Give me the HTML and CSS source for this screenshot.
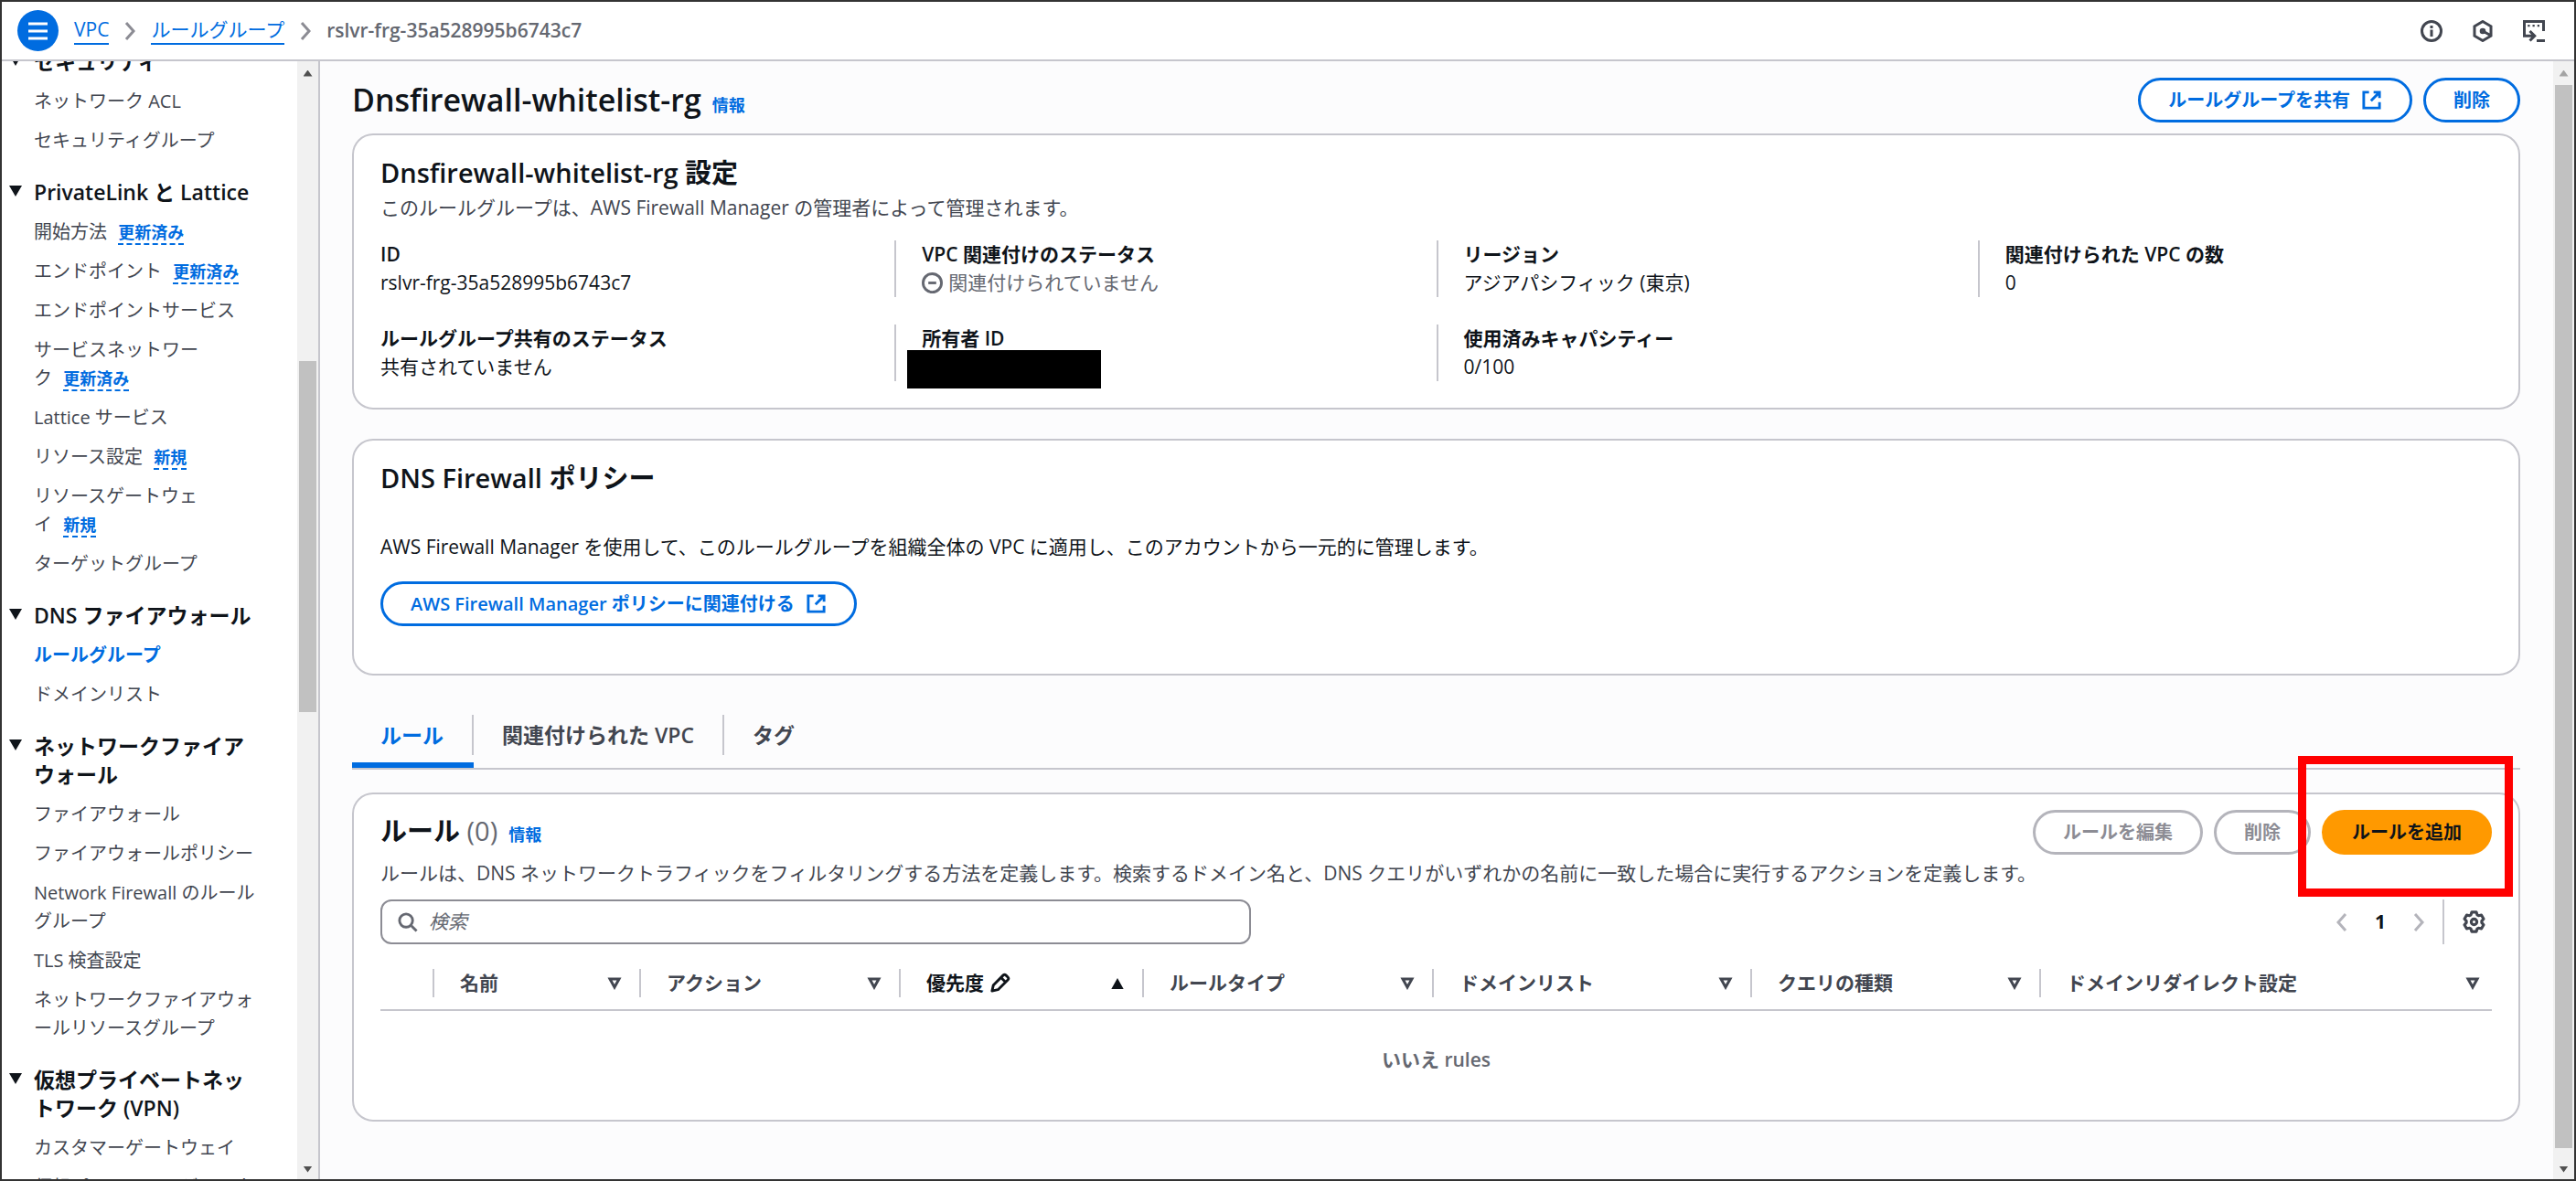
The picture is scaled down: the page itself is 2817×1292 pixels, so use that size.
FILE: index.html
```html
<!DOCTYPE html>
<html lang="ja">
<head>
<meta charset="utf-8">
<meta name="viewport" content="width=device-width, initial-scale=1">
<title>Dnsfirewall-whitelist-rg | VPC</title>
<link rel="stylesheet" href="styles.css">
</head>
<body>
<div class="app">
  <header class="topbar">
    <button class="menu-button" type="button" aria-label="メニュー">
      <svg class="menu-icon" viewBox="0 0 21 20"><path d="M0 2h21M0 10h21M0 18h21" stroke="#fff" stroke-width="3"/></svg>
    </button>
    <nav class="crumbs" aria-label="パンくずリスト">
      <a href="#">VPC</a>
      <svg class="crumb-sep" viewBox="0 0 12 22"><path d="M2 2l8 9-8 9"/></svg>
      <a href="#">ルールグループ</a>
      <svg class="crumb-sep" viewBox="0 0 12 22"><path d="M2 2l8 9-8 9"/></svg>
      <span class="crumb-current">rslvr-frg-35a528995b6743c7</span>
    </nav>
    <div class="tools">
      <button class="tool" type="button" aria-label="情報"><svg class="icon" viewBox="0 0 16 16"><circle cx="8" cy="8" r="7"/><path d="M8 7v5M8 4v2"/></svg></button>
      <button class="tool" type="button" aria-label="診断"><svg class="icon" viewBox="0 0 16 16"><path d="M8 1l6 3.500v7L8 15l-6-3.500v-7zM8 8l5.500 3"/><circle cx="8" cy="8" r="1.200"/></svg></button>
      <button class="tool" type="button" aria-label="CloudShell"><svg class="icon" viewBox="0 0 16 16"><path d="M15 8V1H1v10.500h6.500M5 8l3.500 3.500L5 15M10 15h6"/><path d="M3.500 4h1.500M7 4h1.500M10.500 4H12" stroke-width="1.500"/></svg></button>
    </div>
  </header>

  <div class="body">
    <aside class="sidebar">
      <nav class="side-nav" aria-label="VPC">
        <section class="group">
          <h2 class="group-title">セキュリティ</h2>
          <a href="#">ネットワーク ACL</a>
          <a href="#">セキュリティグループ</a>
        </section>
        <section class="group">
          <h2 class="group-title">PrivateLink と Lattice</h2>
          <a href="#">開始方法&nbsp;<span class="badge">更新済み</span></a>
          <a href="#">エンドポイント&nbsp;<span class="badge">更新済み</span></a>
          <a href="#">エンドポイントサービス</a>
          <a href="#">サービスネットワーク&nbsp;<span class="badge">更新済み</span></a>
          <a href="#">Lattice サービス</a>
          <a href="#">リソース設定&nbsp;<span class="badge">新規</span></a>
          <a href="#">リソースゲートウェイ&nbsp;<span class="badge">新規</span></a>
          <a href="#">ターゲットグループ</a>
        </section>
        <section class="group">
          <h2 class="group-title">DNS ファイアウォール</h2>
          <a href="#" class="current" aria-current="page">ルールグループ</a>
          <a href="#">ドメインリスト</a>
        </section>
        <section class="group">
          <h2 class="group-title">ネットワークファイアウォール</h2>
          <a href="#">ファイアウォール</a>
          <a href="#">ファイアウォールポリシー</a>
          <a href="#">Network Firewall のルールグループ</a>
          <a href="#">TLS 検査設定</a>
          <a href="#">ネットワークファイアウォールリソースグループ</a>
        </section>
        <section class="group">
          <h2 class="group-title">仮想プライベートネットワーク (VPN)</h2>
          <a href="#">カスタマーゲートウェイ</a>
          <a href="#">仮想プライベートゲートウェイ</a>
        </section>
      </nav>
      <div class="scrollbar side-scroll" aria-hidden="true">
        <span class="arrow up"></span><span class="track"><span class="thumb"></span></span><span class="arrow down"></span>
      </div>
    </aside>

    <main class="main">
      <div class="content">
        <div class="page-head">
          <h1>Dnsfirewall-whitelist-rg</h1>
          <a href="#" class="info">情報</a>
          <div class="actions">
            <button class="btn" type="button">ルールグループを共有<svg class="icon" viewBox="0 0 16 16"><path d="M9.500 2H14v4.500M14 2L7.500 8.500M14 9.500V14H2V2h4"/></svg></button>
            <button class="btn" type="button">削除</button>
          </div>
        </div>

        <section class="card settings">
          <h2>Dnsfirewall-whitelist-rg 設定</h2>
          <p class="desc">このルールグループは、AWS Firewall Manager の管理者によって管理されます。</p>
          <dl class="facts">
            <div class="fact"><dt>ID</dt><dd>rslvr-frg-35a528995b6743c7</dd></div>
            <div class="fact"><dt>VPC 関連付けのステータス</dt><dd class="status"><svg class="icon" viewBox="0 0 16 16"><circle cx="8" cy="8" r="7"/><path d="M5 8h6"/></svg>関連付けられていません</dd></div>
            <div class="fact"><dt>リージョン</dt><dd>アジアパシフィック (東京)</dd></div>
            <div class="fact"><dt>関連付けられた VPC の数</dt><dd>0</dd></div>
            <div class="fact"><dt>ルールグループ共有のステータス</dt><dd>共有されていません</dd></div>
            <div class="fact owner"><dt>所有者 ID</dt><dd><span class="redacted"></span></dd></div>
            <div class="fact"><dt>使用済みキャパシティー</dt><dd>0/100</dd></div>
          </dl>
        </section>

        <section class="card policy">
          <h2>DNS Firewall ポリシー</h2>
          <p>AWS Firewall Manager を使用して、このルールグループを組織全体の VPC に適用し、このアカウントから一元的に管理します。</p>
          <button class="btn" type="button">AWS Firewall Manager ポリシーに関連付ける<svg class="icon" viewBox="0 0 16 16"><path d="M9.500 2H14v4.500M14 2L7.500 8.500M14 9.500V14H2V2h4"/></svg></button>
        </section>

        <div class="tabs" role="tablist">
          <button class="tab active" role="tab" aria-selected="true" type="button"><span>ルール</span></button>
          <button class="tab" role="tab" aria-selected="false" type="button"><span>関連付けられた VPC</span></button>
          <button class="tab" role="tab" aria-selected="false" type="button"><span>タグ</span></button>
        </div>

        <section class="card rules">
          <div class="rules-head">
            <h2>ルール <span class="count">(0)</span></h2>
            <a href="#" class="info">情報</a>
            <div class="actions">
              <button class="btn" type="button" disabled>ルールを編集</button>
              <button class="btn" type="button" disabled>削除</button>
              <span class="marked"><button class="btn primary" type="button">ルールを追加</button></span>
            </div>
          </div>
          <p class="desc">ルールは、DNS ネットワークトラフィックをフィルタリングする方法を定義します。検索するドメイン名と、DNS クエリがいずれかの名前に一致した場合に実行するアクションを定義します。</p>
          <div class="toolbar">
            <label class="search">
              <svg class="icon" viewBox="0 0 16 16"><circle cx="7" cy="7" r="5"/><path d="M11 11l4 4"/></svg>
              <input type="search" placeholder="検索" aria-label="検索">
            </label>
            <div class="pager">
              <button type="button" disabled aria-label="前のページ"><svg class="chev" viewBox="0 0 12 22"><path d="M10 2l-8 9 8 9"/></svg></button>
              <button type="button" class="page">1</button>
              <button type="button" disabled aria-label="次のページ"><svg class="chev" viewBox="0 0 12 22"><path d="M2 2l8 9-8 9"/></svg></button>
            </div>
            <button class="gear" type="button" aria-label="設定"><svg class="icon" viewBox="0 0 16 16"><path stroke-linejoin="round" d="M6.430 1.180L9.570 1.180 10.200 3.070 11.170 3.630 13.120 3.230 14.690 5.950 13.370 7.440 13.370 8.560 14.690 10.050 13.120 12.770 11.170 12.370 10.200 12.930 9.570 14.820 6.430 14.820 5.800 12.930 4.830 12.370 2.880 12.770 1.310 10.050 2.630 8.560 2.630 7.440 1.310 5.950 2.880 3.230 4.830 3.630 5.800 3.070z"/><circle cx="8" cy="8" r="2"/></svg></button>
          </div>
          <table class="table">
            <colgroup><col class="c-select"><col class="c-name"><col class="c-action"><col class="c-priority"><col class="c-type"><col class="c-list"><col class="c-query"><col class="c-redirect"></colgroup>
            <thead>
              <tr>
                <td></td>
                <th scope="col"><div class="th">名前<svg class="sort" viewBox="0 0 16 14"><path d="M3 2h10L8 11z"/></svg></div></th>
                <th scope="col"><div class="th">アクション<svg class="sort" viewBox="0 0 16 14"><path d="M3 2h10L8 11z"/></svg></div></th>
                <th scope="col" class="sorted"><div class="th"><span class="th-label">優先度<svg class="icon" viewBox="0 0 16 16"><path stroke-linejoin="round" d="M2 14l1-4.500L10.500 2q1-1 2 0l1.500 1.500q1 1 0 2L6.500 13zM9 4l3.500 3.500"/></svg></span><svg class="sort" viewBox="0 0 16 14"><path d="M3 12h10L8 3z"/></svg></div></th>
                <th scope="col"><div class="th">ルールタイプ<svg class="sort" viewBox="0 0 16 14"><path d="M3 2h10L8 11z"/></svg></div></th>
                <th scope="col"><div class="th">ドメインリスト<svg class="sort" viewBox="0 0 16 14"><path d="M3 2h10L8 11z"/></svg></div></th>
                <th scope="col"><div class="th">クエリの種類<svg class="sort" viewBox="0 0 16 14"><path d="M3 2h10L8 11z"/></svg></div></th>
                <th scope="col"><div class="th">ドメインリダイレクト設定<svg class="sort" viewBox="0 0 16 14"><path d="M3 2h10L8 11z"/></svg></div></th>
              </tr>
            </thead>
            <tbody><tr><td colspan="8" class="empty">いいえ rules</td></tr></tbody>
          </table>
        </section>
      </div>
      <div class="scrollbar main-scroll" aria-hidden="true">
        <span class="arrow up"></span><span class="track"><span class="thumb"></span></span><span class="arrow down"></span>
      </div>
    </main>
  </div>
</div>
</body>
</html>
```
FILE: styles.css
```css
:root {
  --blue: #006ce0;
  --text: #0f141a;
  --muted: #424650;
  --soft: #656871;
  --line: #c6c6cd;
}

* { box-sizing: border-box; }

body {
  margin: 0;
  font-family: "Open Sans", "Noto Sans CJK JP", sans-serif;
  font-size: 21px;
  line-height: 31px;
  color: var(--text);
}

h1, h2, p, dl, dd { margin: 0; }
h1, h2, th, dt { font-weight: 600; }
button, input { font: inherit; color: inherit; }
button { background: none; border: 0; padding: 0; }
a { color: var(--blue); text-decoration: none; }

.icon {
  width: 23px;
  height: 23px;
  flex: none;
  fill: none;
  stroke: currentColor;
  stroke-width: 2;
}

.app {
  display: flex;
  flex-direction: column;
  height: 100vh;
  border: 2px solid #333;
  background: #fff;
}

/* Top bar */
.topbar {
  display: flex;
  align-items: center;
  flex: none;
  height: 65px;
  padding: 0 32px 0 17px;
  border-bottom: 2px solid var(--line);
}
.menu-button {
  display: grid;
  place-items: center;
  width: 45px;
  height: 45px;
  border-radius: 50%;
  background: var(--blue);
}
.menu-icon { width: 21px; height: 20px; }
.crumbs { display: flex; align-items: center; margin-left: 17px; }
.crumbs a { border-bottom: 2px solid currentColor; line-height: 29px; }
.crumb-sep { width: 12px; height: 22px; margin: 0 17px; fill: none; stroke: #8c8c94; stroke-width: 3; }
.crumb-current { font-weight: 600; color: var(--soft); }
.tools { display: flex; gap: 32px; margin-left: auto; color: var(--muted); }
.tool { display: flex; }
.tool .icon { width: 24px; height: 24px; }

.body { display: flex; flex: 1; min-height: 0; }

/* Side navigation */
.sidebar { display: flex; flex: none; width: 348px; border-right: 2px solid var(--line); }
.side-nav { flex: 1; overflow: hidden; line-break: loose; font-size: 20px; }
.group { display: flex; flex-direction: column; gap: 12px; width: 280px; padding-left: 35px; margin-bottom: 26px; }
.group:first-child { margin-top: -15px; }
.group-title { display: flex; margin-left: -27px; font-size: 23px; line-height: 31px; }
.group-title::before {
  content: "";
  flex: none;
  width: 14px;
  height: 12px;
  margin: 8px 13px 0 0;
  background: currentColor;
  clip-path: polygon(0 0, 100% 0, 50% 100%);
}
.group a { color: var(--muted); }
.group a.current { color: var(--blue); font-weight: 600; }
.badge {
  margin-left: 7px;
  font-size: 18px;
  line-height: 20px;
  font-weight: 600;
  color: var(--blue);
  border-bottom: 2px dashed var(--blue);
  white-space: nowrap;
}

/* Scroll bars */
.scrollbar { display: flex; flex-direction: column; flex: none; width: 23px; background: #f1f1f1; }
.arrow { height: 26px; display: grid; place-items: center; }
.arrow::before { content: ""; width: 10px; height: 7px; background: #505050; clip-path: polygon(50% 0, 100% 100%, 0 100%); }
.arrow.down { height: 22px; }
.arrow.down::before { clip-path: polygon(0 0, 100% 0, 50% 100%); }
.track { flex: 1; display: flex; flex-direction: column; padding: 0 2px; }
.thumb { background: #c1c1c1; }
.side-scroll .track { padding-top: 302px; }
.side-scroll .thumb { flex: 0 0 44%; }
.main-scroll .thumb { flex: 0 0 99%; }
.main-scroll .up::before { background: #a3a3a3; }

/* Main */
.main { display: flex; flex: 1; min-width: 0; background: #fcfcfd; }
.content { flex: 1; min-width: 0; padding: 18px 36px 0 35px; }
.page-head, .rules-head { display: flex; align-items: baseline; }
.page-head { height: 61px; }
h1 { font-size: 34px; line-height: 48px; }
h2 { font-size: 29px; line-height: 35px; }
.info { margin-left: 12px; font-size: 18px; font-weight: 600; }
.actions { display: flex; gap: 12px; margin-left: auto; align-self: flex-start; }
.btn {
  display: inline-flex;
  align-items: center;
  gap: 12px;
  height: 49px;
  padding: 0 30px;
  border: 3px solid var(--blue);
  border-radius: 25px;
  background: #fff;
  color: var(--blue);
  font-size: 20px;
  font-weight: 600;
  white-space: nowrap;
}
.btn:disabled { color: #8c8c94; border-color: #b4b4bb; }
.btn.primary { background: #ff9900; border-color: #ff9900; color: var(--text); }

.card { background: #fff; border: 2px solid var(--line); border-radius: 23px; padding: 23px 29px 29px; }
.desc { color: var(--muted); }
.settings .desc { margin-top: 6px; }
.facts { display: grid; grid-template-columns: repeat(4, 1fr); row-gap: 30px; margin: 20px -30px 0; }
.fact { padding: 0 28px; border-left: 2px solid var(--line); }
.fact:nth-child(4n + 1) { border-color: transparent; }
.status { display: flex; align-items: center; gap: 6px; color: var(--soft); }
.owner { position: relative; }
.redacted { position: absolute; left: 12px; top: 28px; width: 212px; height: 42px; background: #000; }

.policy { margin-top: 32px; padding-bottom: 52px; }
.policy p { margin: 43px 0 22px; }
.policy .btn { display: flex; }

.tabs { display: flex; margin-top: 32px; height: 71px; border-bottom: 2px solid var(--line); }
.tab { padding: 11px 0 14px; font-size: 23px; font-weight: 600; color: var(--muted); border-bottom: 6px solid transparent; }
.tab span { display: block; height: 44px; line-height: 44px; padding: 0 31px; border-right: 2px solid var(--line); }
.tab:last-child span { border-right: 0; }
.tab.active { color: var(--blue); border-bottom-color: var(--blue); }

.rules { margin-top: 25px; padding-top: 17px; padding-bottom: 50px; }
.rules-head { height: 54px; }
.rules-head h2 { line-height: 46px; }
.count { font-weight: 400; color: var(--soft); }
.marked { position: relative; display: flex; }
.marked::after { content: ""; position: absolute; inset: -59px -23px -46px -26px; border: 9px solid #f00; pointer-events: none; }
.toolbar { display: flex; align-items: center; margin-top: 13px; }
.search { display: flex; align-items: center; gap: 12px; width: 952px; height: 49px; padding: 0 16px; border: 2px solid #8c8c94; border-radius: 12px; color: var(--soft); }
.search input { flex: 1; min-width: 0; border: 0; outline: 0; padding: 0; background: none; }
.search input::placeholder { font-style: italic; color: var(--soft); opacity: 1; }
.pager { display: flex; align-items: center; margin-left: auto; padding-right: 20px; height: 49px; border-right: 2px solid var(--line); }
.pager button { display: flex; }
.pager .page { padding: 0 30px; font-weight: 700; color: var(--text); }
.chev { width: 12px; height: 22px; fill: none; stroke: #b4b4bb; stroke-width: 3; }
.gear { display: flex; padding: 0 7px 0 20px; color: var(--muted); }
.gear .icon { width: 25px; height: 25px; }

.table { width: 100%; margin-top: 14px; table-layout: fixed; border-collapse: collapse; }
.table td, .table th { padding: 0; text-align: left; font-weight: 600; color: var(--muted); }
.table thead tr { height: 58px; border-bottom: 2px solid var(--line); }
.th { display: flex; align-items: center; justify-content: space-between; height: 31px; padding: 0 19px 0 28px; border-left: 2px solid var(--line); }
.table th:last-child .th { padding-right: 13px; }
.sort { width: 16px; height: 14px; fill: none; stroke: currentColor; stroke-width: 3; }
.sorted .th { color: var(--text); }
.sorted .sort { fill: currentColor; stroke-width: 2; }
.th-label { display: flex; align-items: center; gap: 6px; }
.table .empty { height: 69px; padding-top: 38px; text-align: center; color: var(--soft); }
.c-select { width: 57px; }
.c-name { width: 226px; }
.c-action { width: 284px; }
.c-priority { width: 266px; }
.c-type { width: 317px; }
.c-list { width: 348px; }
.c-query { width: 316px; }
.c-redirect { width: 495px; }
```
